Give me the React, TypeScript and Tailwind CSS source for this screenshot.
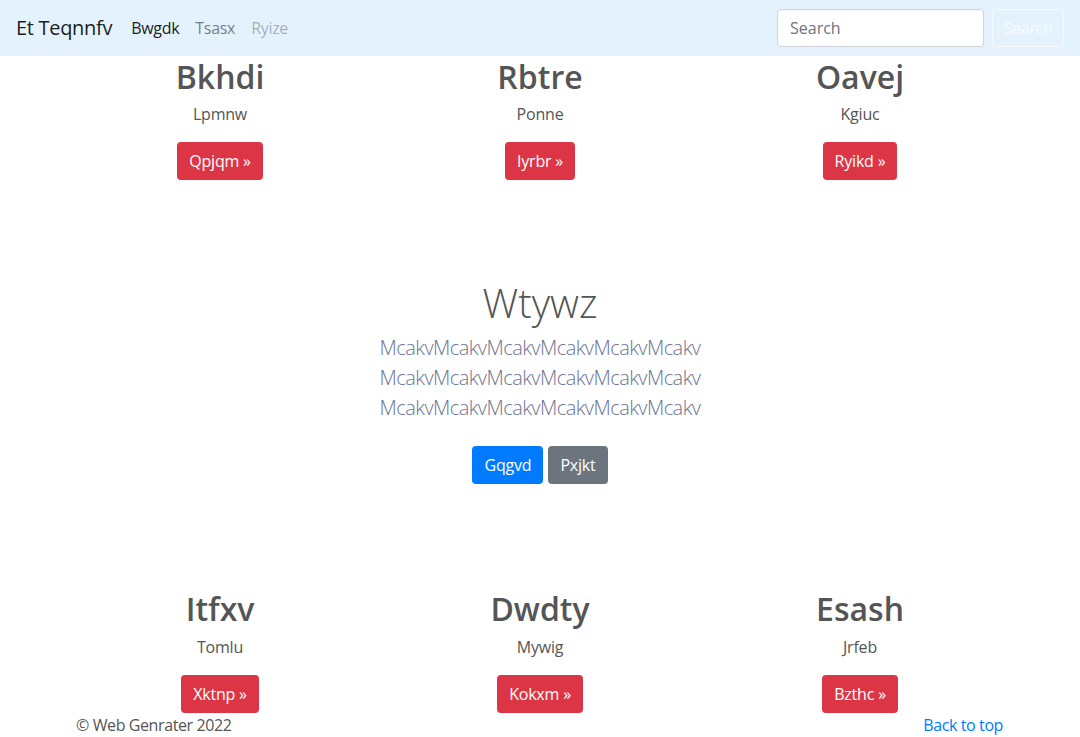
import React from 'react';

interface Feature {
  title: string;
  text: string;
  button: string;
}

const topRow: Feature[] = [
  { title: 'Bkhdi', text: 'Lpmnw', button: 'Qpjqm' },
  { title: 'Rbtre', text: 'Ponne', button: 'Iyrbr' },
  { title: 'Oavej', text: 'Kgiuc', button: 'Ryikd' },
];

const bottomRow: Feature[] = [
  { title: 'Itfxv', text: 'Tomlu', button: 'Xktnp' },
  { title: 'Dwdty', text: 'Mywig', button: 'Kokxm' },
  { title: 'Esash', text: 'Jrfeb', button: 'Bzthc' },
];

const FeatureRow = ({ items }: { items: Feature[] }) => (
  <div className="grid grid-cols-3">
    {items.map((item) => (
      <div key={item.title} className="px-[15px] text-center">
        <h2 className="text-[32px] leading-[1.2] font-semibold text-[#555] mb-[6px]">{item.title}</h2>
        <p className="text-base leading-6 text-[#555] mb-4 tracking-[-0.2px]">{item.text}</p>
        <a className="inline-block bg-[#dc3545] text-white text-base leading-6 px-3 py-[7px] rounded tracking-[-0.2px]">
          {item.button} &raquo;
        </a>
      </div>
    ))}
  </div>
);

export default function App() {
  return (
    <div className="font-['Open_Sans',sans-serif] text-[#555] bg-white min-h-[737px]">
      <nav className="h-14 bg-[#e3f2fd] flex items-center px-4">
        <a className="text-xl leading-[30px] text-black/90 mr-[19px] tracking-[-0.3px]">Et Teqnnfv</a>
        <div className="flex text-base tracking-[-0.3px]">
          <a className="pr-2 text-black/90">Bwgdk</a>
          <a className="px-2 text-black/50">Tsasx</a>
          <a className="px-2 text-black/30">Ryize</a>
        </div>
        <div className="ml-auto flex items-center gap-2">
          <input
            placeholder="Search"
            className="w-[207px] h-[38px] bg-white border border-[#ced4da] rounded px-3 text-base text-[#495057] placeholder:text-[#6c757d] outline-none"
          />
          <button className="w-[72px] h-[38px] border border-[#f8f9fa] rounded text-[#f8f9fa] text-base tracking-[-0.3px]">Search</button>
        </div>
      </nav>

      <main className="w-[960px] mx-auto">
        <div className="pt-[2px]">
          <FeatureRow items={topRow} />
        </div>

        <section className="text-center pt-[99px] pb-[106px]">
          <h1 className="text-[40px] leading-[1.2] font-light text-[#555] mb-[6px]">Wtywz</h1>
          <p className="text-xl leading-[30px] font-light text-[#6c7593] mb-[23px] tracking-[-0.55px]">
            McakvMcakvMcakvMcakvMcakvMcakv
            <br />
            McakvMcakvMcakvMcakvMcakvMcakv
            <br />
            McakvMcakvMcakvMcakvMcakvMcakv
          </p>
          <div className="flex justify-center gap-[5px]">
            <a className="bg-[#007bff] text-white text-base leading-6 px-3 py-[7px] rounded tracking-[-0.2px]">Gqgvd</a>
            <a className="bg-[#6c757d] text-white text-base leading-6 px-3 py-[7px] rounded tracking-[-0.2px]">Pxjkt</a>
          </div>
        </section>

        <FeatureRow items={bottomRow} />
      </main>

      <footer className="w-[960px] mx-auto px-4 flex justify-between text-base leading-6 tracking-[-0.4px]">
        <p className="text-[#555]">&copy; Web Genrater 2022</p>
        <a className="text-[#007bff] pr-[1px]">Back to top</a>
      </footer>
    </div>
  );
}
